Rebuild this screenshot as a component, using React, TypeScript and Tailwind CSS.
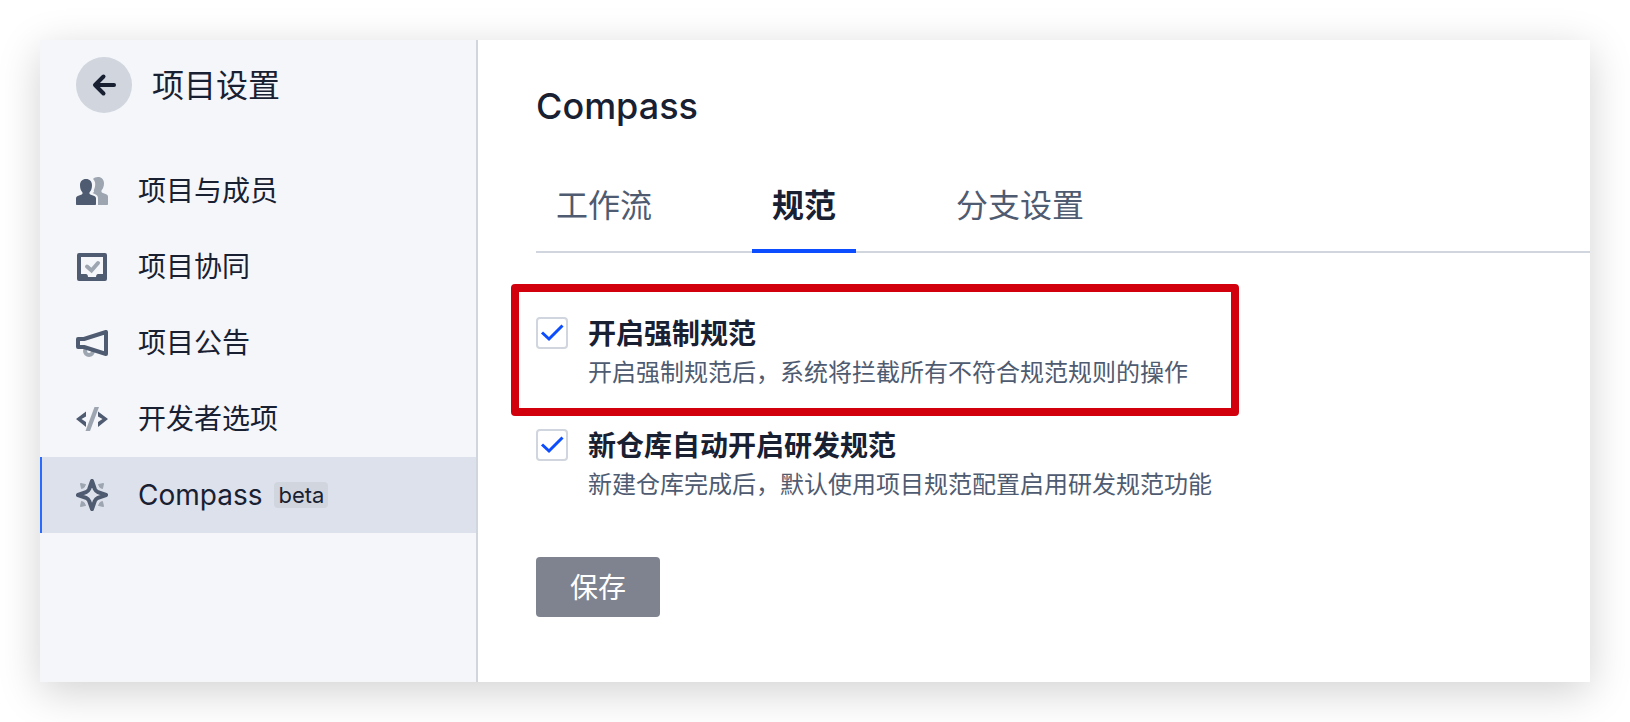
import { useState, type ReactNode } from 'react';

function MembersIcon() {
  return (
    <svg className="size-8" viewBox="0 0 32 32">
      <path
        fill="#9da5b1"
        d="M22 2c3.600 0 6 2.600 6 6.200 0 2.600-.8 5.400-2.200 6.900-.7.8-.5 2.200.5 2.600l3.900 1.500c1.200.5 1.800 1.400 1.800 2.600v7.200c0 .6-.4 1-1 1h-9v-6.500c0-2.200-.9-3.600-2.800-4.300l-2.700-1.100c1.500-.6 1.900-1.700 1.200-2.900 1-1.800 1.500-3.900 1.500-6.100 0-2-.8-3.800-2.200-5 1-1.400 2.700-2.100 5-2.100Z"
      />
      <path
        fill="#4f5b70"
        d="M10 4c3.700 0 6 2.500 6 6.200 0 2.800-.8 5.300-2.200 6.900-.7.8-.5 2 .5 2.400l4 1.600c1.100.4 1.700 1.300 1.700 2.500V29c0 .6-.4 1-1 1H1c-.6 0-1-.4-1-1v-5.400c0-1.200.6-2.100 1.700-2.500l4-1.600c1-.4 1.200-1.600.5-2.400C4.800 15.500 4 13 4 10.200 4 6.500 6.300 4 10 4Z"
      />
    </svg>
  );
}

function InboxIcon() {
  return (
    <svg className="size-8" viewBox="0 0 32 32">
      <path
        fill="#4f5b70"
        fillRule="evenodd"
        d="M3 2h26a2 2 0 0 1 2 2v24a2 2 0 0 1-2 2H3a2 2 0 0 1-2-2V4a2 2 0 0 1 2-2Zm2 4v17h5c1 0 2 1 2 3h8c0-2 1-3 2-3h5V6H5Z"
      />
      <path d="m11 15.500 4.500 4 6.500-7.500" fill="none" stroke="#9da5b1" strokeWidth="4" strokeLinecap="round" />
    </svg>
  );
}

function MegaphoneIcon() {
  return (
    <svg className="size-8" viewBox="0 0 32 32" fill="none">
      <circle cx="13" cy="24" r="4" stroke="#9da5b1" strokeWidth="4" />
      <path fill="#f4f6fa" d="M2 12h6l22-7v22L8 20H2z" />
      <path stroke="#4f5b70" strokeWidth="4" strokeLinejoin="round" d="M2 12h6l22-7v22L8 20H2z" />
    </svg>
  );
}

function CodeIcon() {
  return (
    <svg className="size-8" viewBox="0 0 32 32">
      <path fill="#9da5b1" d="M18.500 4H23L14 28H9.500z" />
      <path fill="#4f5b70" d="M10 8.500v5L5.500 16l4.500 3v5L0 16zM22 8.500v5l4.500 2.500-4.500 3v5L32 16z" />
    </svg>
  );
}

function CompassIcon() {
  return (
    <svg className="size-8" viewBox="0 0 32 32">
      <path
        fill="#9da5b1"
        stroke="#9da5b1"
        strokeLinejoin="round"
        d="M4.500 4.500 9.500 5.500 8 8.500 5.500 9.500ZM27.500 4.500 22.500 5.500 24 8.500 26.500 9.500ZM4.500 27.500 9.500 26.500 8 23.500 5.500 22.500ZM27.500 27.500 22.500 26.500 24 23.500 26.500 22.500Z"
      />
      <path
        fill="none"
        stroke="#4f5b70"
        strokeWidth="4"
        strokeLinejoin="round"
        d="M16 2 18.800 10Q19.800 12.200 22 13.200L30 16 22 18.800Q19.800 19.800 18.800 22L16 30 13.200 22Q12.200 19.800 10 18.800L2 16 10 13.200Q12.200 12.200 13.200 10Z"
      />
    </svg>
  );
}

const navItems: { label: string; icon: ReactNode; badge?: string }[] = [
  { label: '项目与成员', icon: <MembersIcon /> },
  { label: '项目协同', icon: <InboxIcon /> },
  { label: '项目公告', icon: <MegaphoneIcon /> },
  { label: '开发者选项', icon: <CodeIcon /> },
  { label: 'Compass', icon: <CompassIcon />, badge: 'beta' },
];

const tabs = ['工作流', '规范', '分支设置'];

function Option({ id, title, description, highlighted }: {
  id: string;
  title: string;
  description: string;
  highlighted?: boolean;
}) {
  const [checked, setChecked] = useState(true);

  return (
    <div className="relative flex w-fit gap-5">
      {highlighted && (
        <span className="pointer-events-none absolute -top-[29px] -right-[51px] -bottom-[25px] -left-[25px] rounded-sm border-8 border-[#d2000d]" />
      )}
      <span className="relative mt-1 size-8 shrink-0">
        <input
          id={id}
          type="checkbox"
          checked={checked}
          onChange={() => setChecked(!checked)}
          className="peer block size-8 appearance-none rounded-sm border-2 border-[#d0d5de] bg-white"
        />
        <svg className="pointer-events-none absolute inset-0 hidden size-8 peer-checked:block" viewBox="0 0 32 32">
          <path d="m6 15.500 7 6.500L26.500 8.500" fill="none" stroke="#0b4dff" strokeWidth="3" />
        </svg>
      </span>
      <div>
        <label htmlFor={id} className="block text-[28px] leading-[42px] font-bold">{title}</label>
        <p className="text-2xl leading-9 text-[#4f5b70]">{description}</p>
      </div>
    </div>
  );
}

export default function App() {
  const [activeTab, setActiveTab] = useState('规范');

  return (
    <div className="flex min-h-screen bg-white p-10 font-[Inter,'Noto_Sans_CJK_SC',sans-serif] text-[#182032]">
      <div className="flex flex-1 bg-white shadow-[0_10px_40px_rgba(0,0,0,0.18)]">
        <aside className="w-[438px] shrink-0 border-r-2 border-[#d0d5de] bg-[#f4f6fa]">
          <div className="flex h-[113px] items-start gap-5 pt-[17px] pl-9">
            <button aria-label="返回" className="flex size-14 items-center justify-center rounded-full bg-[#d0d5de]">
              <svg className="size-8" viewBox="0 0 32 32" fill="none" stroke="#182032" strokeWidth="4" strokeLinecap="round" strokeLinejoin="round">
                <path d="M26 16H8" />
                <path d="M15.500 7.500 7 16l8.500 8.500" />
              </svg>
            </button>
            <h2 className="text-[32px] leading-[58px]">项目设置</h2>
          </div>
          <nav>
            {navItems.map((item) => (
              <a
                key={item.label}
                href="#"
                className={
                  item.badge
                    ? 'flex h-19 items-center border-l-2 border-[#2a6bff] bg-[#dde1ec] pl-[34px]'
                    : 'flex h-19 items-center pl-9'
                }
              >
                {item.icon}
                <span className="ml-[30px] text-[28px] leading-10">{item.label}</span>
                {item.badge && (
                  <span className="ml-3 rounded-sm bg-[#d0d5de] px-1 text-[22px] leading-[26px]">{item.badge}</span>
                )}
              </a>
            ))}
          </nav>
        </aside>

        <main className="flex-1 pt-11 pl-[58px]">
          <h1 className="text-4xl leading-11 font-medium">Compass</h1>
          <div role="tablist" className="mt-8 flex gap-20 border-b-2 border-[#d0d5de]">
            {tabs.map((tab) => (
              <button
                key={tab}
                role="tab"
                aria-selected={tab === activeTab}
                onClick={() => setActiveTab(tab)}
                className={
                  tab === activeTab
                    ? '-mb-0.5 h-[93px] border-b-4 border-[#0b4dff] px-5 pt-0.5 text-[32px] font-bold'
                    : '-mb-0.5 h-[93px] border-b-4 border-transparent px-5 pt-0.5 text-[32px] text-[#4f5b70]'
                }
              >
                {tab}
              </button>
            ))}
          </div>

          <div className="mt-15 flex flex-col gap-[34px]">
            <Option
              id="force-rules"
              title="开启强制规范"
              description="开启强制规范后，系统将拦截所有不符合规范规则的操作"
              highlighted
            />
            <Option
              id="auto-rules"
              title="新仓库自动开启研发规范"
              description="新建仓库完成后，默认使用项目规范配置启用研发规范功能"
            />
          </div>

          <button className="mt-[54px] h-15 rounded-sm bg-[#7e838f] px-[34px] pt-0.5 text-[28px] text-white">保存</button>
        </main>
      </div>
    </div>
  );
}
